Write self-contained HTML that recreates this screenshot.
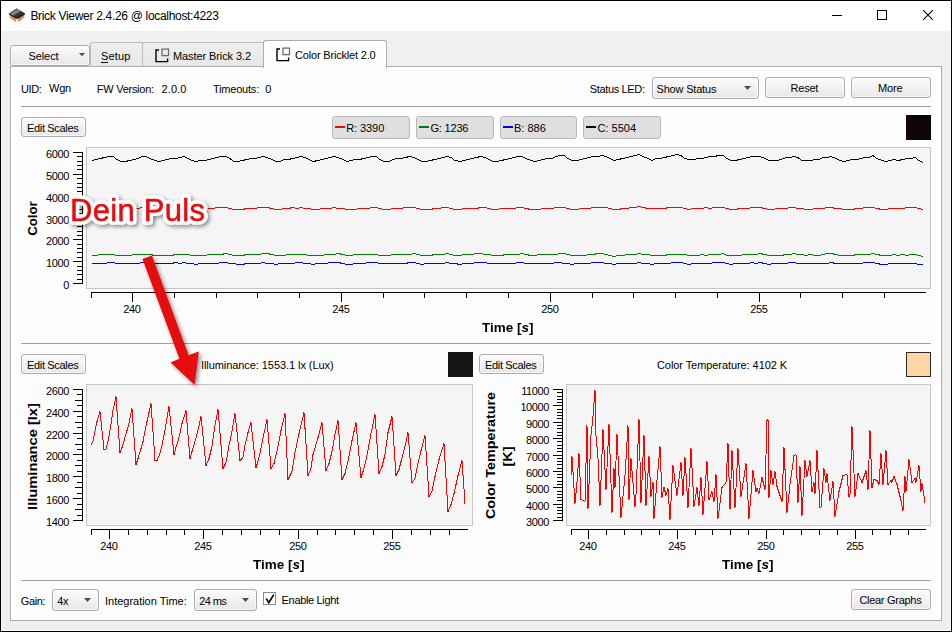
<!DOCTYPE html>
<html><head><meta charset="utf-8"><title>Brick Viewer</title>
<style>
html,body{margin:0;padding:0;}
body{width:952px;height:632px;overflow:hidden;background:#f0f0f0;font-family:"Liberation Sans", sans-serif;font-size:11px;position:relative;}
#win{position:absolute;left:0;top:0;width:952px;height:632px;overflow:hidden;background:#f0f0f0;}
#frame{position:absolute;left:0;top:0;width:950px;height:630px;border:1px solid #000;box-shadow:inset 1px 0 0 #fbfbfb,inset -1px 0 0 #fbfbfb,inset 0 -1px 0 #fbfbfb;z-index:50;pointer-events:none}
#titlebar{position:absolute;left:0;top:0;width:952px;height:31px;background:#fff;}
.abs{position:absolute;}
.t{position:absolute;white-space:pre;}
.btn{position:absolute;border:1px solid #acacac;background:linear-gradient(#fbfbfb,#f2f2f2 50%,#e7e7e7);box-shadow:inset 0 0 0 1px rgba(255,255,255,.6);}
.vbtn{position:absolute;border:1px solid #b9b9b9;background:#dfdfdf;border-radius:3px;}
.tab{position:absolute;border:1px solid #bebebe;border-bottom:none;background:linear-gradient(#eeeeee,#e7e7e7);border-radius:3px 3px 0 0;}
.tabsel{position:absolute;border:1px solid #acacac;border-bottom:none;background:linear-gradient(#ffffff,#fdfdfd);border-radius:3px 3px 0 0;}
.pane{position:absolute;border:1px solid #acacac;background:#fcfcfc;box-shadow:inset 0 0 0 1px #ffffff;}
.sep{position:absolute;background:#a0a0a0;}
.pframe{position:absolute;background:#f5f5f5;border:1px solid #c6c6c6;box-sizing:border-box;}
.arrow{position:absolute;width:0;height:0;border-left:3.5px solid transparent;border-right:3.5px solid transparent;border-top:3.5px solid #505050;}
.rot{position:absolute;text-align:center;font-weight:bold;transform:rotate(-90deg);white-space:nowrap;}
</style></head>
<body><div id="win">
<div id="titlebar"></div>
<svg class="abs" style="left:0;top:0" width="32" height="31" viewBox="0 0 32 31">
<defs><linearGradient id="chipg" x1="0" y1="0" x2="1" y2="1"><stop offset="0" stop-color="#2b2b2b"/><stop offset="0.45" stop-color="#8a8a8a"/><stop offset="0.55" stop-color="#3a3a3a"/><stop offset="1" stop-color="#1c1c1c"/></linearGradient></defs>
<g fill="#f3941f" stroke="#cc5a14" stroke-width="0.5">
<rect x="10.4" y="14.4" width="1.5" height="3.9" rx="0.6"/><rect x="12.4" y="15.8" width="1.5" height="4.1" rx="0.6"/><rect x="14.3" y="17.0" width="1.5" height="4.3" rx="0.6"/>
<rect x="18.4" y="17.0" width="1.5" height="4.1" rx="0.6"/><rect x="20.3" y="15.8" width="1.5" height="3.8" rx="0.6"/><rect x="22.2" y="14.4" width="1.5" height="3.7" rx="0.6"/></g>
<path d="M9.0 13.6 L16.6 8.5 L25.0 13.4 L25.0 14.5 L17.2 18.9 L9.0 14.8 Z" fill="#1e1e1e"/>
<path d="M9.0 13.6 L16.6 8.5 L25.0 13.4 L17.2 17.7 Z" fill="url(#chipg)"/>
</svg>
<span class="t" style="left:30.40px;top:9px;font-size:12px;line-height:14px;letter-spacing:-0.311px;color:#000;">Brick Viewer 2.4.26 @ localhost:4223</span>
<svg class="abs" style="left:820px;top:0px" width="130" height="31" viewBox="0 0 130 31" shape-rendering="crispEdges">
<rect x="12" y="15" width="10" height="1" fill="#000"/>
<rect x="57.5" y="10.5" width="9" height="9" fill="none" stroke="#000" stroke-width="1"/>
<g shape-rendering="auto"><path d="M103.2 10.2 L112.8 19.8 M112.8 10.2 L103.2 19.8" stroke="#000" stroke-width="1.1" fill="none"/></g>
</svg>
<div class="btn" style="left:10px;top:45px;width:78px;height:19px;border-radius:3px;"></div>
<span class="t" style="left:28.50px;top:50px;font-size:11px;line-height:12px;letter-spacing:-0.096px;color:#000;">Select</span>
<svg class="abs" style="left:79px;top:53px" width="6" height="3.3" viewBox="0 0 6 3.3"><path d="M0 0 H6 L3.0 3.3 Z" fill="#4c4c4c"/></svg>
<div class="tab" style="left:90px;top:42px;width:52px;height:24px;"></div>
<span class="t" style="left:101.00px;top:50px;font-size:11px;line-height:12px;letter-spacing:0.150px;color:#000;">Setup</span>
<div class="abs" style="left:101px;top:62px;width:7px;height:1px;background:#000"></div>
<div class="tab" style="left:142px;top:42px;width:121px;height:24px;"></div>
<span class="t" style="left:173.00px;top:50px;font-size:11px;line-height:12px;letter-spacing:-0.092px;color:#000;">Master Brick 3.2</span>
<div class="pane" style="left:10px;top:66px;width:930px;height:553px;"></div>
<div class="tabsel" style="left:263px;top:40px;width:122px;height:27px;"></div>
<span class="t" style="left:295.00px;top:49px;font-size:11px;line-height:12px;letter-spacing:-0.181px;color:#000;">Color Bricklet 2.0</span>
<svg class="abs" style="left:155.8px;top:49.6px;overflow:visible" width="16" height="16" viewBox="0 0 16 16">
<path d="M3 0 H0 V11.6 H11.6 V8.4" fill="none" stroke="#000" stroke-width="1.4"/>
<rect x="6" y="-0.9" width="6.5" height="6.5" fill="none" stroke="#6c6c6c" stroke-width="1.3"/></svg>
<svg class="abs" style="left:276.8px;top:48.6px;overflow:visible" width="16" height="16" viewBox="0 0 16 16">
<path d="M3 0 H0 V11.6 H11.6 V8.4" fill="none" stroke="#000" stroke-width="1.4"/>
<rect x="6" y="-0.9" width="6.5" height="6.5" fill="#fff" stroke="#6c6c6c" stroke-width="1.3"/></svg>
<span class="t" style="left:20.90px;top:83px;font-size:11px;line-height:12px;letter-spacing:-0.350px;color:#000;">UID:</span>
<span class="t" style="left:49.10px;top:82px;font-size:11px;line-height:12px;letter-spacing:-0.275px;color:#000;">Wgn</span>
<span class="t" style="left:96.80px;top:83px;font-size:11px;line-height:12px;letter-spacing:-0.264px;color:#000;">FW Version:</span>
<span class="t" style="left:161.50px;top:83px;font-size:11px;line-height:12px;letter-spacing:0.106px;color:#000;">2.0.0</span>
<span class="t" style="left:213.00px;top:83px;font-size:11px;line-height:12px;letter-spacing:-0.210px;color:#000;">Timeouts:</span>
<span class="t" style="left:265.30px;top:83px;font-size:11px;line-height:12px;letter-spacing:-0.225px;color:#000;">0</span>
<span class="t" style="left:589.70px;top:83px;font-size:11px;line-height:12px;letter-spacing:-0.337px;color:#000;">Status LED:</span>
<div class="btn" style="left:652px;top:77px;width:105px;height:20px;border-radius:3px;"></div>
<svg class="abs" style="left:744px;top:86px" width="7" height="4" viewBox="0 0 7 4"><path d="M0 0 H7 L3.5 4 Z" fill="#4c4c4c"/></svg>
<span class="t" style="left:656.50px;top:83px;font-size:11px;line-height:12px;letter-spacing:-0.188px;color:#000;">Show Status</span>
<div class="btn" style="left:765px;top:77px;width:78px;height:19px;border-radius:3px;"></div>
<span class="t" style="left:790.60px;top:82px;font-size:11px;line-height:12px;letter-spacing:-0.230px;color:#000;">Reset</span>
<div class="btn" style="left:851px;top:77px;width:78px;height:19px;border-radius:3px;"></div>
<span class="t" style="left:878.10px;top:82px;font-size:11px;line-height:12px;letter-spacing:-0.191px;color:#000;">More</span>
<div class="sep" style="left:21px;top:106px;width:910px;height:1px;"></div>
<div class="btn" style="left:21px;top:117px;width:63px;height:18px;border-radius:3px;"></div>
<span class="t" style="left:27.00px;top:122px;font-size:11px;line-height:12px;letter-spacing:-0.330px;color:#000;">Edit Scales</span>
<div class="vbtn" style="left:332px;top:116px;width:76px;height:21px;"></div>
<div class="abs" style="left:335px;top:126px;width:10px;height:2px;background:#f00"></div>
<span class="t" style="left:346.20px;top:122px;font-size:11px;line-height:12px;letter-spacing:-0.076px;color:#000;">R: 3390</span>
<div class="vbtn" style="left:416px;top:116px;width:76px;height:21px;"></div>
<div class="abs" style="left:419px;top:126px;width:10px;height:2px;background:#008000"></div>
<span class="t" style="left:430.40px;top:122px;font-size:11px;line-height:12px;letter-spacing:-0.177px;color:#000;">G: 1236</span>
<div class="vbtn" style="left:500px;top:116px;width:75px;height:21px;"></div>
<div class="abs" style="left:503px;top:126px;width:10px;height:2px;background:#00f"></div>
<span class="t" style="left:514.00px;top:122px;font-size:11px;line-height:12px;letter-spacing:-0.002px;color:#000;">B: 886</span>
<div class="vbtn" style="left:583px;top:116px;width:76px;height:21px;"></div>
<div class="abs" style="left:586px;top:126px;width:10px;height:2px;background:#000"></div>
<span class="t" style="left:597.40px;top:122px;font-size:11px;line-height:12px;letter-spacing:0.038px;color:#000;">C: 5504</span>
<div class="abs" style="left:906px;top:115px;width:25px;height:25px;background:#100505;"></div>
<div class="pframe" style="left:86px;top:147px;width:845px;height:142px;"></div>
<span class="t" style="left:123.20px;top:303px;font-size:11px;line-height:12px;letter-spacing:-0.386px;color:#000;">240</span>
<span class="t" style="left:332.20px;top:303px;font-size:11px;line-height:12px;letter-spacing:-0.386px;color:#000;">245</span>
<span class="t" style="left:541.20px;top:303px;font-size:11px;line-height:12px;letter-spacing:-0.386px;color:#000;">250</span>
<span class="t" style="left:750.20px;top:303px;font-size:11px;line-height:12px;letter-spacing:-0.386px;color:#000;">255</span>
<span class="t" style="left:63.27px;top:279px;font-size:11px;line-height:12px;letter-spacing:-0.398px;color:#000;">0</span>
<span class="t" style="left:46.11px;top:257px;font-size:11px;line-height:12px;letter-spacing:-0.398px;color:#000;">1000</span>
<span class="t" style="left:46.11px;top:235px;font-size:11px;line-height:12px;letter-spacing:-0.398px;color:#000;">2000</span>
<span class="t" style="left:46.11px;top:214px;font-size:11px;line-height:12px;letter-spacing:-0.398px;color:#000;">3000</span>
<span class="t" style="left:46.11px;top:192px;font-size:11px;line-height:12px;letter-spacing:-0.398px;color:#000;">4000</span>
<span class="t" style="left:46.11px;top:170px;font-size:11px;line-height:12px;letter-spacing:-0.398px;color:#000;">5000</span>
<span class="t" style="left:46.11px;top:148px;font-size:11px;line-height:12px;letter-spacing:-0.398px;color:#000;">6000</span>
<div class="rot" style="left:15.82px;top:211.25px;width:33.95px;height:15px;line-height:15px;font-size:13px;transform:rotate(-90deg) scaleX(1.0161);">Color</div>
<div class="abs" style="left:477.98px;top:320px;width:59.64px;height:15px;line-height:15px;text-align:center;font-size:13px;font-weight:bold;white-space:nowrap;transform:scaleX(1.0375);">Time [<i>s</i>]</div>
<div class="sep" style="left:21px;top:343px;width:910px;height:1px;"></div>
<div class="btn" style="left:21px;top:354px;width:63px;height:18px;border-radius:3px;"></div>
<span class="t" style="left:27.00px;top:359px;font-size:11px;line-height:12px;letter-spacing:-0.330px;color:#000;">Edit Scales</span>
<span class="t" style="left:201.00px;top:359px;font-size:11px;line-height:12px;letter-spacing:-0.072px;color:#000;">Illuminance: 1553.1 lx (Lux)</span>
<div class="abs" style="left:448px;top:352px;width:25px;height:25px;background:#141414;"></div>
<div class="pframe" style="left:86px;top:384px;width:387px;height:142px;"></div>
<span class="t" style="left:100.20px;top:540px;font-size:11px;line-height:12px;letter-spacing:-0.386px;color:#000;">240</span>
<span class="t" style="left:194.20px;top:540px;font-size:11px;line-height:12px;letter-spacing:-0.386px;color:#000;">245</span>
<span class="t" style="left:289.20px;top:540px;font-size:11px;line-height:12px;letter-spacing:-0.386px;color:#000;">250</span>
<span class="t" style="left:383.20px;top:540px;font-size:11px;line-height:12px;letter-spacing:-0.386px;color:#000;">255</span>
<span class="t" style="left:46.11px;top:516px;font-size:11px;line-height:12px;letter-spacing:-0.398px;color:#000;">1400</span>
<span class="t" style="left:46.11px;top:494px;font-size:11px;line-height:12px;letter-spacing:-0.398px;color:#000;">1600</span>
<span class="t" style="left:46.11px;top:472px;font-size:11px;line-height:12px;letter-spacing:-0.398px;color:#000;">1800</span>
<span class="t" style="left:46.11px;top:450px;font-size:11px;line-height:12px;letter-spacing:-0.398px;color:#000;">2000</span>
<span class="t" style="left:46.11px;top:429px;font-size:11px;line-height:12px;letter-spacing:-0.398px;color:#000;">2200</span>
<span class="t" style="left:46.11px;top:407px;font-size:11px;line-height:12px;letter-spacing:-0.398px;color:#000;">2400</span>
<span class="t" style="left:46.11px;top:385px;font-size:11px;line-height:12px;letter-spacing:-0.398px;color:#000;">2600</span>
<div class="rot" style="left:-14.52px;top:448.50px;width:94.64px;height:15px;line-height:15px;font-size:13px;transform:rotate(-90deg) scaleX(1.1285);">Illuminance [lx]</div>
<div class="abs" style="left:248.98px;top:557px;width:59.64px;height:15px;line-height:15px;text-align:center;font-size:13px;font-weight:bold;white-space:nowrap;transform:scaleX(1.0375);">Time [<i>s</i>]</div>
<div class="btn" style="left:479px;top:354px;width:63px;height:18px;border-radius:3px;"></div>
<span class="t" style="left:485.00px;top:359px;font-size:11px;line-height:12px;letter-spacing:-0.330px;color:#000;">Edit Scales</span>
<span class="t" style="left:657.00px;top:359px;font-size:11px;line-height:12px;letter-spacing:-0.075px;color:#000;">Color Temperature: 4102 K</span>
<div class="abs" style="left:906px;top:352px;width:23px;height:23px;background:#fdd5a6;border:1px solid #2a2a2a;"></div>
<div class="pframe" style="left:566px;top:384px;width:365px;height:142px;"></div>
<span class="t" style="left:579.20px;top:540px;font-size:11px;line-height:12px;letter-spacing:-0.386px;color:#000;">240</span>
<span class="t" style="left:668.20px;top:540px;font-size:11px;line-height:12px;letter-spacing:-0.386px;color:#000;">245</span>
<span class="t" style="left:757.20px;top:540px;font-size:11px;line-height:12px;letter-spacing:-0.386px;color:#000;">250</span>
<span class="t" style="left:846.20px;top:540px;font-size:11px;line-height:12px;letter-spacing:-0.386px;color:#000;">255</span>
<span class="t" style="left:526.11px;top:516px;font-size:11px;line-height:12px;letter-spacing:-0.398px;color:#000;">3000</span>
<span class="t" style="left:526.11px;top:500px;font-size:11px;line-height:12px;letter-spacing:-0.398px;color:#000;">4000</span>
<span class="t" style="left:526.11px;top:483px;font-size:11px;line-height:12px;letter-spacing:-0.398px;color:#000;">5000</span>
<span class="t" style="left:526.11px;top:467px;font-size:11px;line-height:12px;letter-spacing:-0.398px;color:#000;">6000</span>
<span class="t" style="left:526.11px;top:451px;font-size:11px;line-height:12px;letter-spacing:-0.398px;color:#000;">7000</span>
<span class="t" style="left:526.11px;top:434px;font-size:11px;line-height:12px;letter-spacing:-0.398px;color:#000;">8000</span>
<span class="t" style="left:526.11px;top:418px;font-size:11px;line-height:12px;letter-spacing:-0.398px;color:#000;">9000</span>
<span class="t" style="left:520.39px;top:401px;font-size:11px;line-height:12px;letter-spacing:-0.398px;color:#000;">10000</span>
<span class="t" style="left:521.15px;top:385px;font-size:11px;line-height:12px;letter-spacing:-0.387px;color:#000;">11000</span>
<div class="rot" style="left:433.03px;top:447.90px;width:115.34px;height:15px;line-height:15px;font-size:13px;transform:rotate(-90deg) scaleX(1.1011);">Color Temperature</div>
<div class="rot" style="left:498.08px;top:448.50px;width:18.05px;height:15px;line-height:15px;font-size:13px;transform:rotate(-90deg) scaleX(1.1082);">[K]</div>
<div class="abs" style="left:717.98px;top:557px;width:59.64px;height:15px;line-height:15px;text-align:center;font-size:13px;font-weight:bold;white-space:nowrap;transform:scaleX(1.0375);">Time [<i>s</i>]</div>
<svg class="abs" style="left:0;top:0" width="952" height="632" viewBox="0 0 952 632"><rect x="91" y="292" width="835" height="1" fill="#000" shape-rendering="crispEdges"/><rect x="91" y="292" width="1" height="6" fill="#000" shape-rendering="crispEdges"/><rect x="132" y="292" width="1" height="10" fill="#000" shape-rendering="crispEdges"/><rect x="174" y="292" width="1" height="6" fill="#000" shape-rendering="crispEdges"/><rect x="216" y="292" width="1" height="6" fill="#000" shape-rendering="crispEdges"/><rect x="257" y="292" width="1" height="6" fill="#000" shape-rendering="crispEdges"/><rect x="299" y="292" width="1" height="6" fill="#000" shape-rendering="crispEdges"/><rect x="341" y="292" width="1" height="10" fill="#000" shape-rendering="crispEdges"/><rect x="383" y="292" width="1" height="6" fill="#000" shape-rendering="crispEdges"/><rect x="424" y="292" width="1" height="6" fill="#000" shape-rendering="crispEdges"/><rect x="466" y="292" width="1" height="6" fill="#000" shape-rendering="crispEdges"/><rect x="508" y="292" width="1" height="6" fill="#000" shape-rendering="crispEdges"/><rect x="550" y="292" width="1" height="10" fill="#000" shape-rendering="crispEdges"/><rect x="592" y="292" width="1" height="6" fill="#000" shape-rendering="crispEdges"/><rect x="633" y="292" width="1" height="6" fill="#000" shape-rendering="crispEdges"/><rect x="675" y="292" width="1" height="6" fill="#000" shape-rendering="crispEdges"/><rect x="717" y="292" width="1" height="6" fill="#000" shape-rendering="crispEdges"/><rect x="759" y="292" width="1" height="10" fill="#000" shape-rendering="crispEdges"/><rect x="800" y="292" width="1" height="6" fill="#000" shape-rendering="crispEdges"/><rect x="842" y="292" width="1" height="6" fill="#000" shape-rendering="crispEdges"/><rect x="884" y="292" width="1" height="6" fill="#000" shape-rendering="crispEdges"/><rect x="82" y="152" width="1" height="132" fill="#000" shape-rendering="crispEdges"/><rect x="73" y="283" width="9" height="1" fill="#000" shape-rendering="crispEdges"/><rect x="77" y="279" width="5" height="1" fill="#000" shape-rendering="crispEdges"/><rect x="77" y="274" width="5" height="1" fill="#000" shape-rendering="crispEdges"/><rect x="77" y="270" width="5" height="1" fill="#000" shape-rendering="crispEdges"/><rect x="77" y="266" width="5" height="1" fill="#000" shape-rendering="crispEdges"/><rect x="73" y="261" width="9" height="1" fill="#000" shape-rendering="crispEdges"/><rect x="77" y="257" width="5" height="1" fill="#000" shape-rendering="crispEdges"/><rect x="77" y="252" width="5" height="1" fill="#000" shape-rendering="crispEdges"/><rect x="77" y="248" width="5" height="1" fill="#000" shape-rendering="crispEdges"/><rect x="77" y="244" width="5" height="1" fill="#000" shape-rendering="crispEdges"/><rect x="73" y="239" width="9" height="1" fill="#000" shape-rendering="crispEdges"/><rect x="77" y="235" width="5" height="1" fill="#000" shape-rendering="crispEdges"/><rect x="77" y="231" width="5" height="1" fill="#000" shape-rendering="crispEdges"/><rect x="77" y="226" width="5" height="1" fill="#000" shape-rendering="crispEdges"/><rect x="77" y="222" width="5" height="1" fill="#000" shape-rendering="crispEdges"/><rect x="73" y="218" width="9" height="1" fill="#000" shape-rendering="crispEdges"/><rect x="77" y="213" width="5" height="1" fill="#000" shape-rendering="crispEdges"/><rect x="77" y="209" width="5" height="1" fill="#000" shape-rendering="crispEdges"/><rect x="77" y="204" width="5" height="1" fill="#000" shape-rendering="crispEdges"/><rect x="77" y="200" width="5" height="1" fill="#000" shape-rendering="crispEdges"/><rect x="73" y="196" width="9" height="1" fill="#000" shape-rendering="crispEdges"/><rect x="77" y="191" width="5" height="1" fill="#000" shape-rendering="crispEdges"/><rect x="77" y="187" width="5" height="1" fill="#000" shape-rendering="crispEdges"/><rect x="77" y="183" width="5" height="1" fill="#000" shape-rendering="crispEdges"/><rect x="77" y="178" width="5" height="1" fill="#000" shape-rendering="crispEdges"/><rect x="73" y="174" width="9" height="1" fill="#000" shape-rendering="crispEdges"/><rect x="77" y="169" width="5" height="1" fill="#000" shape-rendering="crispEdges"/><rect x="77" y="165" width="5" height="1" fill="#000" shape-rendering="crispEdges"/><rect x="77" y="161" width="5" height="1" fill="#000" shape-rendering="crispEdges"/><rect x="77" y="156" width="5" height="1" fill="#000" shape-rendering="crispEdges"/><rect x="73" y="152" width="9" height="1" fill="#000" shape-rendering="crispEdges"/><polyline points="92.0,160.5 96.0,159.5 100.0,158.5 105.0,157.5 109.0,156.5 113.0,156.5 117.0,159.5 121.0,161.5 125.0,161.5 130.0,160.5 134.0,159.5 138.0,158.5 142.0,156.5 146.0,156.5 150.0,158.5 155.0,160.5 159.0,161.5 163.0,160.5 167.0,159.5 171.0,158.5 176.0,158.5 180.0,157.5 184.0,156.5 188.0,158.5 192.0,160.5 196.0,161.5 201.0,160.5 205.0,160.5 209.0,159.5 213.0,158.5 217.0,157.5 221.0,156.5 226.0,156.5 230.0,158.5 234.0,161.5 238.0,161.5 242.0,160.5 247.0,159.5 251.0,158.5 255.0,158.5 259.0,157.5 263.0,156.5 267.0,157.5 272.0,159.5 276.0,161.5 280.0,161.5 284.0,159.5 288.0,159.5 293.0,158.5 297.0,157.5 301.0,156.5 305.0,157.5 309.0,159.5 313.0,161.5 318.0,160.5 322.0,159.5 326.0,158.5 330.0,157.5 334.0,156.5 338.0,157.5 343.0,159.5 347.0,161.5 351.0,160.5 355.0,159.5 359.0,159.5 364.0,158.5 368.0,157.5 372.0,156.5 376.0,156.5 380.0,159.5 384.0,161.5 389.0,161.5 393.0,159.5 397.0,158.5 401.0,158.5 405.0,157.5 410.0,156.5 414.0,157.5 418.0,159.5 422.0,161.5 426.0,161.5 430.0,160.5 435.0,159.5 439.0,158.5 443.0,157.5 447.0,156.5 451.0,157.5 455.0,160.5 460.0,161.5 464.0,160.5 468.0,159.5 472.0,158.5 476.0,157.5 481.0,156.5 485.0,157.5 489.0,159.5 493.0,161.5 497.0,161.5 501.0,160.5 506.0,159.5 510.0,158.5 514.0,157.5 518.0,156.5 522.0,156.5 526.0,158.5 531.0,160.5 535.0,161.5 539.0,160.5 543.0,159.5 547.0,158.5 552.0,158.5 556.0,156.5 560.0,155.5 564.0,155.5 568.0,158.5 572.0,160.5 577.0,160.5 581.0,159.5 585.0,158.5 589.0,157.5 593.0,156.5 598.0,156.5 602.0,155.5 606.0,156.5 610.0,158.5 614.0,160.5 618.0,159.5 623.0,158.5 627.0,157.5 631.0,156.5 635.0,155.5 639.0,154.5 643.0,156.5 648.0,158.5 652.0,160.5 656.0,158.5 660.0,158.5 664.0,157.5 669.0,156.5 673.0,155.5 677.0,154.5 681.0,155.5 685.0,158.5 689.0,159.5 694.0,159.5 698.0,158.5 702.0,158.5 706.0,157.5 710.0,156.5 714.0,156.5 719.0,155.5 723.0,155.5 727.0,158.5 731.0,160.5 735.0,160.5 740.0,159.5 744.0,158.5 748.0,157.5 752.0,156.5 756.0,156.5 760.0,156.5 765.0,158.5 769.0,160.5 773.0,160.5 777.0,160.5 781.0,159.5 786.0,157.5 790.0,157.5 794.0,156.5 798.0,157.5 802.0,160.5 806.0,160.5 811.0,160.5 815.0,159.5 819.0,159.5 823.0,157.5 827.0,157.5 831.0,156.5 836.0,158.5 840.0,160.5 844.0,161.5 848.0,160.5 852.0,159.5 857.0,159.5 861.0,158.5 865.0,157.5 869.0,157.5 873.0,155.5 877.0,158.5 882.0,160.5 886.0,161.5 890.0,160.5 894.0,159.5 898.0,160.5 903.0,159.5 907.0,158.5 911.0,158.5 915.0,157.5 919.0,160.5 923.0,162.5" fill="none" stroke="#000" stroke-width="1" shape-rendering="crispEdges"/><polyline points="92.0,209.5 96.0,208.5 100.0,208.5 105.0,207.5 109.0,207.5 113.0,207.5 117.0,208.5 121.0,209.5 125.0,209.5 130.0,209.5 134.0,208.5 138.0,208.5 142.0,207.5 146.0,207.5 150.0,208.5 155.0,209.5 159.0,209.5 163.0,209.5 167.0,209.5 171.0,208.5 176.0,208.5 180.0,207.5 184.0,207.5 188.0,208.5 192.0,209.5 196.0,209.5 201.0,209.5 205.0,208.5 209.0,208.5 213.0,208.5 217.0,207.5 221.0,207.5 226.0,207.5 230.0,208.5 234.0,209.5 238.0,209.5 242.0,209.5 247.0,208.5 251.0,208.5 255.0,208.5 259.0,207.5 263.0,207.5 267.0,207.5 272.0,208.5 276.0,209.5 280.0,209.5 284.0,208.5 288.0,208.5 293.0,207.5 297.0,208.5 301.0,207.5 305.0,208.5 309.0,208.5 313.0,209.5 318.0,209.5 322.0,208.5 326.0,208.5 330.0,208.5 334.0,207.5 338.0,208.5 343.0,208.5 347.0,209.5 351.0,209.5 355.0,209.5 359.0,208.5 364.0,208.5 368.0,208.5 372.0,207.5 376.0,207.5 380.0,208.5 384.0,209.5 389.0,209.5 393.0,208.5 397.0,208.5 401.0,208.5 405.0,207.5 410.0,207.5 414.0,207.5 418.0,208.5 422.0,209.5 426.0,209.5 430.0,209.5 435.0,208.5 439.0,208.5 443.0,207.5 447.0,207.5 451.0,208.5 455.0,209.5 460.0,209.5 464.0,208.5 468.0,208.5 472.0,208.5 476.0,208.5 481.0,207.5 485.0,207.5 489.0,208.5 493.0,209.5 497.0,209.5 501.0,208.5 506.0,208.5 510.0,208.5 514.0,208.5 518.0,207.5 522.0,207.5 526.0,208.5 531.0,209.5 535.0,209.5 539.0,209.5 543.0,208.5 547.0,208.5 552.0,208.5 556.0,207.5 560.0,207.5 564.0,207.5 568.0,208.5 572.0,209.5 577.0,209.5 581.0,208.5 585.0,208.5 589.0,208.5 593.0,207.5 598.0,207.5 602.0,207.5 606.0,207.5 610.0,208.5 614.0,209.5 618.0,209.5 623.0,208.5 627.0,208.5 631.0,207.5 635.0,207.5 639.0,206.5 643.0,207.5 648.0,208.5 652.0,208.5 656.0,208.5 660.0,208.5 664.0,208.5 669.0,207.5 673.0,207.5 677.0,207.5 681.0,207.5 685.0,208.5 689.0,209.5 694.0,208.5 698.0,208.5 702.0,208.5 706.0,207.5 710.0,208.5 714.0,207.5 719.0,207.5 723.0,207.5 727.0,208.5 731.0,209.5 735.0,209.5 740.0,208.5 744.0,208.5 748.0,208.5 752.0,207.5 756.0,207.5 760.0,207.5 765.0,208.5 769.0,209.5 773.0,209.5 777.0,208.5 781.0,208.5 786.0,208.5 790.0,207.5 794.0,207.5 798.0,208.5 802.0,208.5 806.0,209.5 811.0,209.5 815.0,208.5 819.0,208.5 823.0,208.5 827.0,207.5 831.0,207.5 836.0,208.5 840.0,208.5 844.0,209.5 848.0,209.5 852.0,209.5 857.0,208.5 861.0,208.5 865.0,207.5 869.0,207.5 873.0,207.5 877.0,208.5 882.0,209.5 886.0,209.5 890.0,208.5 894.0,208.5 898.0,208.5 903.0,208.5 907.0,207.5 911.0,207.5 915.0,207.5 919.0,208.5 923.0,209.5" fill="none" stroke="#f00" stroke-width="1" shape-rendering="crispEdges"/><polyline points="92.0,255.5 96.0,255.5 100.0,254.5 105.0,254.5 109.0,254.5 113.0,254.5 117.0,255.5 121.0,255.5 125.0,255.5 130.0,255.5 134.0,254.5 138.0,254.5 142.0,254.5 146.0,254.5 150.0,254.5 155.0,255.5 159.0,255.5 163.0,255.5 167.0,255.5 171.0,255.5 176.0,254.5 180.0,254.5 184.0,254.5 188.0,254.5 192.0,255.5 196.0,255.5 201.0,255.5 205.0,255.5 209.0,254.5 213.0,254.5 217.0,254.5 221.0,254.5 226.0,253.5 230.0,254.5 234.0,255.5 238.0,255.5 242.0,255.5 247.0,254.5 251.0,254.5 255.0,254.5 259.0,254.5 263.0,253.5 267.0,253.5 272.0,254.5 276.0,255.5 280.0,255.5 284.0,255.5 288.0,254.5 293.0,254.5 297.0,254.5 301.0,254.5 305.0,254.5 309.0,255.5 313.0,255.5 318.0,255.5 322.0,255.5 326.0,254.5 330.0,254.5 334.0,254.5 338.0,253.5 343.0,254.5 347.0,255.5 351.0,255.5 355.0,254.5 359.0,254.5 364.0,254.5 368.0,254.5 372.0,254.5 376.0,254.5 380.0,255.5 384.0,255.5 389.0,255.5 393.0,254.5 397.0,254.5 401.0,254.5 405.0,254.5 410.0,254.5 414.0,253.5 418.0,254.5 422.0,255.5 426.0,255.5 430.0,255.5 435.0,254.5 439.0,254.5 443.0,254.5 447.0,253.5 451.0,254.5 455.0,255.5 460.0,255.5 464.0,254.5 468.0,254.5 472.0,254.5 476.0,253.5 481.0,253.5 485.0,254.5 489.0,254.5 493.0,255.5 497.0,255.5 501.0,255.5 506.0,254.5 510.0,254.5 514.0,254.5 518.0,254.5 522.0,253.5 526.0,254.5 531.0,255.5 535.0,255.5 539.0,254.5 543.0,254.5 547.0,254.5 552.0,254.5 556.0,254.5 560.0,253.5 564.0,253.5 568.0,254.5 572.0,255.5 577.0,255.5 581.0,255.5 585.0,255.5 589.0,254.5 593.0,254.5 598.0,253.5 602.0,253.5 606.0,254.5 610.0,255.5 614.0,256.5 618.0,255.5 623.0,255.5 627.0,254.5 631.0,254.5 635.0,254.5 639.0,253.5 643.0,254.5 648.0,254.5 652.0,255.5 656.0,255.5 660.0,255.5 664.0,255.5 669.0,254.5 673.0,254.5 677.0,254.5 681.0,254.5 685.0,254.5 689.0,255.5 694.0,255.5 698.0,255.5 702.0,254.5 706.0,255.5 710.0,254.5 714.0,254.5 719.0,254.5 723.0,253.5 727.0,255.5 731.0,255.5 735.0,255.5 740.0,255.5 744.0,254.5 748.0,254.5 752.0,254.5 756.0,254.5 760.0,253.5 765.0,254.5 769.0,255.5 773.0,255.5 777.0,255.5 781.0,255.5 786.0,254.5 790.0,254.5 794.0,253.5 798.0,254.5 802.0,254.5 806.0,255.5 811.0,254.5 815.0,255.5 819.0,255.5 823.0,254.5 827.0,253.5 831.0,253.5 836.0,254.5 840.0,255.5 844.0,255.5 848.0,255.5 852.0,255.5 857.0,254.5 861.0,254.5 865.0,254.5 869.0,254.5 873.0,253.5 877.0,254.5 882.0,255.5 886.0,255.5 890.0,255.5 894.0,254.5 898.0,255.5 903.0,254.5 907.0,255.5 911.0,254.5 915.0,254.5 919.0,255.5 923.0,256.5" fill="none" stroke="#008000" stroke-width="1" shape-rendering="crispEdges"/><polyline points="92.0,263.5 96.0,263.5 100.0,263.5 105.0,263.5 109.0,262.5 113.0,262.5 117.0,263.5 121.0,263.5 125.0,263.5 130.0,263.5 134.0,263.5 138.0,263.5 142.0,262.5 146.0,262.5 150.0,263.5 155.0,263.5 159.0,263.5 163.0,263.5 167.0,263.5 171.0,263.5 176.0,262.5 180.0,263.5 184.0,262.5 188.0,263.5 192.0,263.5 196.0,264.5 201.0,263.5 205.0,263.5 209.0,263.5 213.0,263.5 217.0,263.5 221.0,262.5 226.0,262.5 230.0,263.5 234.0,263.5 238.0,264.5 242.0,264.5 247.0,263.5 251.0,263.5 255.0,263.5 259.0,263.5 263.0,262.5 267.0,263.5 272.0,263.5 276.0,264.5 280.0,263.5 284.0,263.5 288.0,263.5 293.0,263.5 297.0,262.5 301.0,262.5 305.0,263.5 309.0,263.5 313.0,264.5 318.0,263.5 322.0,263.5 326.0,263.5 330.0,262.5 334.0,262.5 338.0,262.5 343.0,263.5 347.0,264.5 351.0,264.5 355.0,263.5 359.0,263.5 364.0,263.5 368.0,262.5 372.0,262.5 376.0,262.5 380.0,263.5 384.0,263.5 389.0,263.5 393.0,263.5 397.0,263.5 401.0,263.5 405.0,263.5 410.0,262.5 414.0,262.5 418.0,263.5 422.0,264.5 426.0,263.5 430.0,263.5 435.0,263.5 439.0,263.5 443.0,263.5 447.0,262.5 451.0,263.5 455.0,263.5 460.0,264.5 464.0,263.5 468.0,263.5 472.0,263.5 476.0,262.5 481.0,262.5 485.0,262.5 489.0,263.5 493.0,263.5 497.0,263.5 501.0,263.5 506.0,263.5 510.0,263.5 514.0,263.5 518.0,262.5 522.0,262.5 526.0,263.5 531.0,263.5 535.0,263.5 539.0,263.5 543.0,263.5 547.0,263.5 552.0,263.5 556.0,262.5 560.0,262.5 564.0,263.5 568.0,263.5 572.0,264.5 577.0,263.5 581.0,263.5 585.0,263.5 589.0,263.5 593.0,262.5 598.0,262.5 602.0,262.5 606.0,263.5 610.0,263.5 614.0,264.5 618.0,263.5 623.0,263.5 627.0,263.5 631.0,263.5 635.0,263.5 639.0,262.5 643.0,263.5 648.0,263.5 652.0,264.5 656.0,263.5 660.0,263.5 664.0,263.5 669.0,263.5 673.0,262.5 677.0,262.5 681.0,262.5 685.0,263.5 689.0,264.5 694.0,263.5 698.0,263.5 702.0,263.5 706.0,263.5 710.0,263.5 714.0,262.5 719.0,262.5 723.0,262.5 727.0,263.5 731.0,264.5 735.0,263.5 740.0,263.5 744.0,263.5 748.0,263.5 752.0,262.5 756.0,263.5 760.0,262.5 765.0,263.5 769.0,264.5 773.0,263.5 777.0,263.5 781.0,263.5 786.0,263.5 790.0,262.5 794.0,262.5 798.0,263.5 802.0,263.5 806.0,263.5 811.0,263.5 815.0,263.5 819.0,263.5 823.0,263.5 827.0,263.5 831.0,262.5 836.0,263.5 840.0,263.5 844.0,263.5 848.0,263.5 852.0,263.5 857.0,263.5 861.0,263.5 865.0,262.5 869.0,262.5 873.0,262.5 877.0,263.5 882.0,264.5 886.0,264.5 890.0,263.5 894.0,263.5 898.0,263.5 903.0,263.5 907.0,263.5 911.0,263.5 915.0,263.5 919.0,264.5 923.0,264.5" fill="none" stroke="#00f" stroke-width="1" shape-rendering="crispEdges"/><rect x="91" y="529" width="377" height="1" fill="#000" shape-rendering="crispEdges"/><rect x="91" y="529" width="1" height="6" fill="#000" shape-rendering="crispEdges"/><rect x="109" y="529" width="1" height="10" fill="#000" shape-rendering="crispEdges"/><rect x="128" y="529" width="1" height="6" fill="#000" shape-rendering="crispEdges"/><rect x="147" y="529" width="1" height="6" fill="#000" shape-rendering="crispEdges"/><rect x="166" y="529" width="1" height="6" fill="#000" shape-rendering="crispEdges"/><rect x="184" y="529" width="1" height="6" fill="#000" shape-rendering="crispEdges"/><rect x="203" y="529" width="1" height="10" fill="#000" shape-rendering="crispEdges"/><rect x="222" y="529" width="1" height="6" fill="#000" shape-rendering="crispEdges"/><rect x="241" y="529" width="1" height="6" fill="#000" shape-rendering="crispEdges"/><rect x="260" y="529" width="1" height="6" fill="#000" shape-rendering="crispEdges"/><rect x="279" y="529" width="1" height="6" fill="#000" shape-rendering="crispEdges"/><rect x="298" y="529" width="1" height="10" fill="#000" shape-rendering="crispEdges"/><rect x="317" y="529" width="1" height="6" fill="#000" shape-rendering="crispEdges"/><rect x="335" y="529" width="1" height="6" fill="#000" shape-rendering="crispEdges"/><rect x="354" y="529" width="1" height="6" fill="#000" shape-rendering="crispEdges"/><rect x="373" y="529" width="1" height="6" fill="#000" shape-rendering="crispEdges"/><rect x="392" y="529" width="1" height="10" fill="#000" shape-rendering="crispEdges"/><rect x="411" y="529" width="1" height="6" fill="#000" shape-rendering="crispEdges"/><rect x="430" y="529" width="1" height="6" fill="#000" shape-rendering="crispEdges"/><rect x="449" y="529" width="1" height="6" fill="#000" shape-rendering="crispEdges"/><rect x="82" y="389" width="1" height="132" fill="#000" shape-rendering="crispEdges"/><rect x="73" y="520" width="9" height="1" fill="#000" shape-rendering="crispEdges"/><rect x="77" y="515" width="5" height="1" fill="#000" shape-rendering="crispEdges"/><rect x="75" y="509" width="7" height="1" fill="#000" shape-rendering="crispEdges"/><rect x="77" y="504" width="5" height="1" fill="#000" shape-rendering="crispEdges"/><rect x="73" y="498" width="9" height="1" fill="#000" shape-rendering="crispEdges"/><rect x="77" y="493" width="5" height="1" fill="#000" shape-rendering="crispEdges"/><rect x="75" y="487" width="7" height="1" fill="#000" shape-rendering="crispEdges"/><rect x="77" y="482" width="5" height="1" fill="#000" shape-rendering="crispEdges"/><rect x="73" y="476" width="9" height="1" fill="#000" shape-rendering="crispEdges"/><rect x="77" y="471" width="5" height="1" fill="#000" shape-rendering="crispEdges"/><rect x="75" y="465" width="7" height="1" fill="#000" shape-rendering="crispEdges"/><rect x="77" y="460" width="5" height="1" fill="#000" shape-rendering="crispEdges"/><rect x="73" y="454" width="9" height="1" fill="#000" shape-rendering="crispEdges"/><rect x="77" y="449" width="5" height="1" fill="#000" shape-rendering="crispEdges"/><rect x="75" y="444" width="7" height="1" fill="#000" shape-rendering="crispEdges"/><rect x="77" y="438" width="5" height="1" fill="#000" shape-rendering="crispEdges"/><rect x="73" y="433" width="9" height="1" fill="#000" shape-rendering="crispEdges"/><rect x="77" y="427" width="5" height="1" fill="#000" shape-rendering="crispEdges"/><rect x="75" y="422" width="7" height="1" fill="#000" shape-rendering="crispEdges"/><rect x="77" y="416" width="5" height="1" fill="#000" shape-rendering="crispEdges"/><rect x="73" y="411" width="9" height="1" fill="#000" shape-rendering="crispEdges"/><rect x="77" y="405" width="5" height="1" fill="#000" shape-rendering="crispEdges"/><rect x="75" y="400" width="7" height="1" fill="#000" shape-rendering="crispEdges"/><rect x="77" y="394" width="5" height="1" fill="#000" shape-rendering="crispEdges"/><rect x="73" y="389" width="9" height="1" fill="#000" shape-rendering="crispEdges"/><polyline points="91.0,444.5 93.0,441.5 95.0,431.5 97.0,421.5 100.0,411.5 104.0,449.5 106.0,449.5 108.0,441.5 110.0,430.5 113.0,410.5 116.0,396.5 120.0,452.5 122.0,447.5 125.0,437.5 129.0,423.5 132.0,408.5 136.0,464.5 139.0,455.5 143.0,441.5 147.0,421.5 151.0,403.5 155.0,460.5 157.0,460.5 160.0,453.5 163.0,440.5 166.0,424.5 169.0,406.5 174.0,454.5 176.0,447.5 179.0,437.5 182.0,423.5 186.0,410.5 190.0,458.5 192.0,451.5 195.0,441.5 198.0,430.5 201.0,416.5 206.0,465.5 209.0,458.5 212.0,446.5 215.0,425.5 218.0,409.5 223.0,468.5 226.0,462.5 229.0,445.5 232.0,431.5 235.0,413.5 240.0,460.5 243.0,457.5 245.0,445.5 248.0,432.5 251.0,422.5 256.0,467.5 258.0,461.5 261.0,448.5 264.0,433.5 267.0,419.5 271.0,468.5 274.0,463.5 278.0,446.5 281.0,430.5 285.0,413.5 288.0,479.5 292.0,471.5 295.0,452.5 299.0,433.5 304.0,412.5 308.0,475.5 311.0,468.5 313.0,454.5 318.0,437.5 322.0,422.5 326.0,470.5 329.0,463.5 332.0,451.5 335.0,434.5 338.0,420.5 342.0,479.5 345.0,473.5 349.0,456.5 352.0,440.5 356.0,422.5 361.0,477.5 364.0,468.5 367.0,455.5 371.0,433.5 375.0,414.5 379.0,473.5 382.0,466.5 385.0,454.5 388.0,432.5 392.0,416.5 396.0,475.5 399.0,469.5 401.0,461.5 405.0,446.5 408.0,432.5 412.0,482.5 415.0,478.5 418.0,463.5 421.0,450.5 425.0,435.5 429.0,496.5 432.0,491.5 435.0,476.5 439.0,459.5 444.0,443.5 448.0,511.5 451.0,504.5 454.0,493.5 458.0,475.5 462.0,460.5 465.0,503.5" fill="none" stroke="#f00" stroke-width="1" shape-rendering="crispEdges"/><rect x="571" y="529" width="355" height="1" fill="#000" shape-rendering="crispEdges"/><rect x="571" y="529" width="1" height="6" fill="#000" shape-rendering="crispEdges"/><rect x="588" y="529" width="1" height="10" fill="#000" shape-rendering="crispEdges"/><rect x="606" y="529" width="1" height="6" fill="#000" shape-rendering="crispEdges"/><rect x="624" y="529" width="1" height="6" fill="#000" shape-rendering="crispEdges"/><rect x="641" y="529" width="1" height="6" fill="#000" shape-rendering="crispEdges"/><rect x="659" y="529" width="1" height="6" fill="#000" shape-rendering="crispEdges"/><rect x="677" y="529" width="1" height="10" fill="#000" shape-rendering="crispEdges"/><rect x="695" y="529" width="1" height="6" fill="#000" shape-rendering="crispEdges"/><rect x="712" y="529" width="1" height="6" fill="#000" shape-rendering="crispEdges"/><rect x="730" y="529" width="1" height="6" fill="#000" shape-rendering="crispEdges"/><rect x="748" y="529" width="1" height="6" fill="#000" shape-rendering="crispEdges"/><rect x="766" y="529" width="1" height="10" fill="#000" shape-rendering="crispEdges"/><rect x="783" y="529" width="1" height="6" fill="#000" shape-rendering="crispEdges"/><rect x="801" y="529" width="1" height="6" fill="#000" shape-rendering="crispEdges"/><rect x="819" y="529" width="1" height="6" fill="#000" shape-rendering="crispEdges"/><rect x="837" y="529" width="1" height="6" fill="#000" shape-rendering="crispEdges"/><rect x="855" y="529" width="1" height="10" fill="#000" shape-rendering="crispEdges"/><rect x="872" y="529" width="1" height="6" fill="#000" shape-rendering="crispEdges"/><rect x="890" y="529" width="1" height="6" fill="#000" shape-rendering="crispEdges"/><rect x="908" y="529" width="1" height="6" fill="#000" shape-rendering="crispEdges"/><rect x="562" y="389" width="1" height="132" fill="#000" shape-rendering="crispEdges"/><rect x="553" y="520" width="9" height="1" fill="#000" shape-rendering="crispEdges"/><rect x="557" y="517" width="5" height="1" fill="#000" shape-rendering="crispEdges"/><rect x="557" y="513" width="5" height="1" fill="#000" shape-rendering="crispEdges"/><rect x="557" y="510" width="5" height="1" fill="#000" shape-rendering="crispEdges"/><rect x="557" y="507" width="5" height="1" fill="#000" shape-rendering="crispEdges"/><rect x="553" y="504" width="9" height="1" fill="#000" shape-rendering="crispEdges"/><rect x="557" y="500" width="5" height="1" fill="#000" shape-rendering="crispEdges"/><rect x="557" y="497" width="5" height="1" fill="#000" shape-rendering="crispEdges"/><rect x="557" y="494" width="5" height="1" fill="#000" shape-rendering="crispEdges"/><rect x="557" y="491" width="5" height="1" fill="#000" shape-rendering="crispEdges"/><rect x="553" y="487" width="9" height="1" fill="#000" shape-rendering="crispEdges"/><rect x="557" y="484" width="5" height="1" fill="#000" shape-rendering="crispEdges"/><rect x="557" y="481" width="5" height="1" fill="#000" shape-rendering="crispEdges"/><rect x="557" y="477" width="5" height="1" fill="#000" shape-rendering="crispEdges"/><rect x="557" y="474" width="5" height="1" fill="#000" shape-rendering="crispEdges"/><rect x="553" y="471" width="9" height="1" fill="#000" shape-rendering="crispEdges"/><rect x="557" y="468" width="5" height="1" fill="#000" shape-rendering="crispEdges"/><rect x="557" y="464" width="5" height="1" fill="#000" shape-rendering="crispEdges"/><rect x="557" y="461" width="5" height="1" fill="#000" shape-rendering="crispEdges"/><rect x="557" y="458" width="5" height="1" fill="#000" shape-rendering="crispEdges"/><rect x="553" y="455" width="9" height="1" fill="#000" shape-rendering="crispEdges"/><rect x="557" y="451" width="5" height="1" fill="#000" shape-rendering="crispEdges"/><rect x="557" y="448" width="5" height="1" fill="#000" shape-rendering="crispEdges"/><rect x="557" y="445" width="5" height="1" fill="#000" shape-rendering="crispEdges"/><rect x="557" y="441" width="5" height="1" fill="#000" shape-rendering="crispEdges"/><rect x="553" y="438" width="9" height="1" fill="#000" shape-rendering="crispEdges"/><rect x="557" y="435" width="5" height="1" fill="#000" shape-rendering="crispEdges"/><rect x="557" y="432" width="5" height="1" fill="#000" shape-rendering="crispEdges"/><rect x="557" y="428" width="5" height="1" fill="#000" shape-rendering="crispEdges"/><rect x="557" y="425" width="5" height="1" fill="#000" shape-rendering="crispEdges"/><rect x="553" y="422" width="9" height="1" fill="#000" shape-rendering="crispEdges"/><rect x="557" y="418" width="5" height="1" fill="#000" shape-rendering="crispEdges"/><rect x="557" y="415" width="5" height="1" fill="#000" shape-rendering="crispEdges"/><rect x="557" y="412" width="5" height="1" fill="#000" shape-rendering="crispEdges"/><rect x="557" y="409" width="5" height="1" fill="#000" shape-rendering="crispEdges"/><rect x="553" y="405" width="9" height="1" fill="#000" shape-rendering="crispEdges"/><rect x="557" y="402" width="5" height="1" fill="#000" shape-rendering="crispEdges"/><rect x="557" y="399" width="5" height="1" fill="#000" shape-rendering="crispEdges"/><rect x="557" y="396" width="5" height="1" fill="#000" shape-rendering="crispEdges"/><rect x="557" y="392" width="5" height="1" fill="#000" shape-rendering="crispEdges"/><rect x="553" y="389" width="9" height="1" fill="#000" shape-rendering="crispEdges"/><polyline points="571.0,475.5 572.0,456.5 575.0,503.5 577.0,482.5 579.0,453.5 581.0,499.5 585.0,501.5 587.0,425.5 588.0,508.5 591.0,435.5 593.0,416.5 595.0,390.5 596.0,435.5 598.0,458.5 600.0,505.5 603.0,429.5 606.0,489.5 609.0,424.5 612.0,512.5 614.0,468.5 615.0,487.5 617.0,434.5 621.0,517.5 625.0,475.5 628.0,425.5 629.0,499.5 631.0,458.5 635.0,506.5 636.0,494.5 639.0,419.5 641.0,502.5 644.0,435.5 646.0,505.5 649.0,456.5 651.0,496.5 653.0,482.5 654.0,518.5 657.0,480.5 660.0,446.5 662.0,497.5 664.0,487.5 666.0,495.5 668.0,488.5 670.0,519.5 673.0,465.5 677.0,495.5 681.0,462.5 683.0,495.5 685.0,457.5 688.0,507.5 691.0,448.5 694.0,506.5 697.0,487.5 699.0,505.5 701.0,477.5 703.0,514.5 707.0,461.5 709.0,499.5 712.0,491.5 714.0,501.5 716.0,474.5 718.0,518.5 722.0,487.5 726.0,482.5 728.0,443.5 730.0,509.5 732.0,450.5 735.0,507.5 738.0,448.5 741.0,496.5 746.0,463.5 749.0,518.5 753.0,470.5 756.0,491.5 757.0,488.5 759.0,493.5 762.0,477.5 765.0,489.5 767.0,420.5 768.0,419.5 769.0,497.5 771.0,470.5 773.0,484.5 775.0,471.5 777.0,486.5 782.0,501.5 784.0,447.5 787.0,512.5 790.0,484.5 794.0,455.5 796.0,454.5 798.0,502.5 800.0,466.5 802.0,515.5 805.0,460.5 807.0,476.5 810.0,460.5 812.0,491.5 814.0,482.5 815.0,493.5 817.0,450.5 820.0,507.5 821.0,507.5 824.0,468.5 826.0,482.5 827.0,473.5 830.0,500.5 833.0,481.5 835.0,516.5 839.0,491.5 843.0,475.5 847.0,474.5 849.0,496.5 850.0,494.5 852.0,426.5 855.0,496.5 858.0,473.5 862.0,482.5 866.0,470.5 868.0,489.5 870.0,430.5 872.0,487.5 874.0,479.5 877.0,480.5 879.0,484.5 881.0,453.5 883.0,484.5 886.0,450.5 888.0,484.5 891.0,480.5 892.0,482.5 894.0,476.5 897.0,484.5 900.0,496.5 903.0,510.5 905.0,476.5 906.0,491.5 909.0,459.5 912.0,482.5 915.0,478.5 916.0,482.5 919.0,465.5 921.0,491.5 922.0,483.5 925.0,502.5" fill="none" stroke="#f00" stroke-width="1" shape-rendering="crispEdges"/></svg>
<div class="sep" style="left:21px;top:580px;width:910px;height:1px;"></div>
<span class="t" style="left:20.80px;top:595px;font-size:11px;line-height:12px;letter-spacing:-0.419px;color:#000;">Gain:</span>
<div class="btn" style="left:52px;top:589px;width:45px;height:20px;border-radius:3px;"></div>
<span class="t" style="left:57.20px;top:595px;font-size:11px;line-height:12px;letter-spacing:-0.312px;color:#000;">4x</span>
<svg class="abs" style="left:84px;top:598px" width="7" height="4" viewBox="0 0 7 4"><path d="M0 0 H7 L3.5 4 Z" fill="#4c4c4c"/></svg>
<span class="t" style="left:105.00px;top:595px;font-size:11px;line-height:12px;letter-spacing:-0.014px;color:#000;">Integration Time:</span>
<div class="btn" style="left:194px;top:589px;width:61px;height:20px;border-radius:3px;"></div>
<span class="t" style="left:199.30px;top:595px;font-size:11px;line-height:12px;letter-spacing:-0.614px;color:#000;">24 ms</span>
<svg class="abs" style="left:242px;top:598px" width="7" height="4" viewBox="0 0 7 4"><path d="M0 0 H7 L3.5 4 Z" fill="#4c4c4c"/></svg>
<div class="abs" style="left:263px;top:592px;width:11px;height:11px;background:#fff;border:1px solid #8a8a8a;"></div>
<svg class="abs" style="left:263px;top:592px" width="13" height="13" viewBox="0 0 13 13"><path d="M3.2 6.6 L5.8 10.6 L10.8 2.6" fill="none" stroke="#000" stroke-width="1.7"/></svg>
<span class="t" style="left:281.60px;top:594px;font-size:11px;line-height:12px;letter-spacing:-0.331px;color:#000;">Enable Light</span>
<div class="btn" style="left:851px;top:589px;width:78px;height:19px;border-radius:3px;"></div>
<span class="t" style="left:859.40px;top:594px;font-size:11px;line-height:12px;letter-spacing:-0.285px;color:#000;">Clear Graphs</span>
<svg class="abs" style="left:0;top:0" width="952" height="632" viewBox="0 0 952 632">
<defs><filter id="sh" x="-20%" y="-20%" width="150%" height="150%"><feGaussianBlur in="SourceAlpha" stdDeviation="2"/><feOffset dx="2" dy="2"/><feComponentTransfer><feFuncA type="linear" slope="0.45"/></feComponentTransfer><feMerge><feMergeNode/><feMergeNode in="SourceGraphic"/></feMerge></filter></defs>
<g filter="url(#sh)">
<path d="M142.5 258.9 L151.9 255.4 L188.6 355.2 L198.8 351.6 L194.7 385 L170.6 362.6 L179.4 358.8 Z" fill="#e5090f"/>
<text x="70" y="221" font-family="Liberation Sans, sans-serif" font-size="31" fill="#fff" stroke="#fff" stroke-width="7.5" stroke-linejoin="round" textLength="135">Dein Puls</text>
<text x="70" y="221" font-family="Liberation Sans, sans-serif" font-size="31" fill="#e5090f" stroke="#e5090f" stroke-width="0.5" textLength="135">Dein Puls</text>
</g></svg>
<div id="frame"></div>
</div></body></html>
